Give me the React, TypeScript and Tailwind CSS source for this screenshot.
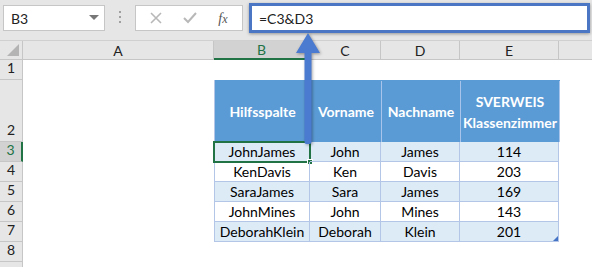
import React from "react";

const cols = [
  { key: "A", w: "w-[191px]" },
  { key: "B", w: "w-[96px]" },
  { key: "C", w: "w-[71px]" },
  { key: "D", w: "w-[79px]" },
  { key: "E", w: "w-[99px]" },
];

const data = [
  ["JohnJames", "John", "James", "114"],
  ["KenDavis", "Ken", "Davis", "203"],
  ["SaraJames", "Sara", "James", "169"],
  ["JohnMines", "John", "Mines", "143"],
  ["DeborahKlein", "Deborah", "Klein", "201"],
];

const RowHead = ({ n, active, tall }: { n?: number; active?: boolean; tall?: boolean }) => (
  <div
    className={`flex w-[23px] shrink-0 justify-center border-b border-r border-[#c6c6c6] ${
      tall ? "h-[62px]" : "h-[20px]"
    } items-end pb-[1px] ${active ? "border-r-2 border-r-[#217346] bg-[#d2d2d2] text-[#217346]" : "bg-[#e6e6e6] text-[#222]"}`}
  >
    {n}
  </div>
);

const EmptyA = ({ tall }: { tall?: boolean }) => (
  <div className={`w-[191px] shrink-0 bg-white ${tall ? "h-[62px]" : "h-[20px]"}`} />
);

export default function App() {
  return (
    <div
      className="relative h-[267px] w-[592px] overflow-hidden bg-white text-[14px] text-black"
      style={{ fontFamily: "Lato, 'Liberation Sans', sans-serif" }}
    >
      {/* formula bar */}
      <div className="flex h-[40px] items-start bg-[#e6e6e6] pl-[3px]">
        <div className="mt-[5px] flex h-[26px] w-[102px] items-center justify-between border border-[#c6c6c6] bg-white pl-[7px] pr-[5px]">
          <span className="text-[#222]">B3</span>
          <svg width="10" height="6" viewBox="0 0 10 6">
            <path d="M0 0 L10 0 L5 5 Z" fill="#777" />
          </svg>
        </div>
        <div className="mt-[11px] flex w-[30px] flex-col items-center gap-[3px]">
          <span className="h-[2px] w-[2px] bg-[#a0a0a0]" />
          <span className="h-[2px] w-[2px] bg-[#a0a0a0]" />
          <span className="h-[2px] w-[2px] bg-[#a0a0a0]" />
        </div>
        <div className="mt-[5px] flex h-[26px] w-[108px] items-center justify-around border border-[#c6c6c6] bg-white px-[4px]">
          <svg width="12" height="12" viewBox="0 0 12 12">
            <path d="M1 1 L11 11 M11 1 L1 11" stroke="#b8b8b8" strokeWidth="1.6" />
          </svg>
          <svg width="14" height="12" viewBox="0 0 14 12">
            <path d="M1 6 L5 10 L13 1" stroke="#b8b8b8" strokeWidth="2" fill="none" />
          </svg>
          <span className="font-['Liberation_Serif'] text-[14px] italic text-[#555]">
            f<span className="text-[12px]">x</span>
          </span>
        </div>
        <div className="ml-[6px] mr-[2px] mt-[3px] flex h-[30px] flex-1 items-center border-[3px] border-[#4a76c4] bg-white pl-[7px] shadow-[0_1px_3px_rgba(0,0,0,0.35)]">
          <span className="text-[#222]">=C3&amp;D3</span>
        </div>
      </div>

      {/* column headers */}
      <div className="flex h-[20px] border-t border-[#d0d0d0] bg-[#e6e6e6]">
        <div className="relative w-[23px] shrink-0 border-b border-r border-[#c6c6c6]">
          <svg className="absolute bottom-[3px] right-[3px]" width="12" height="12" viewBox="0 0 12 12">
            <path d="M12 0 L12 12 L0 12 Z" fill="#b4b4b4" />
          </svg>
        </div>
        {cols.map((c) => (
          <div
            key={c.key}
            className={`${c.w} flex shrink-0 items-center justify-center border-r border-[#c6c6c6] ${
              c.key === "B" ? "border-b-2 border-b-[#217346] bg-[#d2d2d2] text-[#217346]" : "border-b text-[#222]"
            }`}
          >
            {c.key}
          </div>
        ))}
        <div className="flex-1 border-b border-[#c6c6c6]" />
      </div>

      {/* row 1 */}
      <div className="flex">
        <RowHead n={1} />
        <div className="h-[20px] flex-1 bg-white" />
      </div>

      {/* row 2 - table header */}
      <div className="flex">
        <RowHead n={2} tall />
        <EmptyA tall />
        <div className="flex h-[62px] border-l border-[#b4c6e7] bg-[#5b9bd5] pt-[1px] font-bold text-white">
          {["Hilfsspalte", "Vorname", "Nachname"].map((t, i) => (
            <div
              key={t}
              className={`${cols[i + 1].w} flex items-center justify-center border-r border-[#a9c4ea] ${i === 0 ? "w-[95px]" : ""}`}
            >
              {t}
            </div>
          ))}
          <div className="flex w-[99px] flex-col items-center justify-center border-r border-[#a9c4ea] leading-[21px]">
            <span>SVERWEIS</span>
            <span>Klassenzimmer</span>
          </div>
        </div>
      </div>

      {/* data rows */}
      {data.map((r, ri) => (
        <div key={ri} className="flex">
          <RowHead n={ri + 3} active={ri === 0} />
          <EmptyA />
          <div className={`flex h-[20px] border-l border-[#b4c6e7] ${ri % 2 === 0 ? "bg-[#ddebf7]" : "bg-white"}`}>
            {r.map((t, ci) => (
              <div
                key={ci}
                className={`${ci === 0 ? "w-[95px]" : cols[ci + 1].w} relative flex items-end justify-center border-b border-r border-[#b4c6e7] leading-[19px]`}
              >
                {t}
                {ri === 0 && ci === 0 && (
                  <>
                    <div className="absolute -left-[2px] -top-[1px] bottom-[-2px] right-[-2px] border-2 border-[#217346]" />
                    <div className="absolute -bottom-[4px] -right-[4px] h-[6px] w-[6px] border border-white bg-[#217346]" />
                  </>
                )}
                {ri === 4 && ci === 3 && (
                  <svg className="absolute bottom-0 right-0" width="5" height="5" viewBox="0 0 5 5">
                    <path d="M5 0 L5 5 L0 5 Z" fill="#4472c4" />
                  </svg>
                )}
              </div>
            ))}
          </div>
        </div>
      ))}

      <div className="flex">
        <RowHead n={8} />
        <div className="h-[20px] flex-1 bg-white" />
      </div>
      <div className="flex">
        <RowHead />
        <div className="h-[20px] flex-1 bg-white" />
      </div>

      {/* arrow */}
      <svg
        className="pointer-events-none absolute left-[292px] top-[30px]"
        width="32"
        height="118"
        viewBox="0 0 32 118"
        style={{ filter: "drop-shadow(1px 1px 1.5px rgba(0,0,0,0.35))" }}
      >
        <path d="M16 3 L28 23 L19.5 23 L19.5 112 Q19.5 114 17.5 114 L14.5 114 Q12.5 114 12.5 112 L12.5 23 L4 23 Z" fill="#4a7bd0" />
      </svg>
    </div>
  );
}
